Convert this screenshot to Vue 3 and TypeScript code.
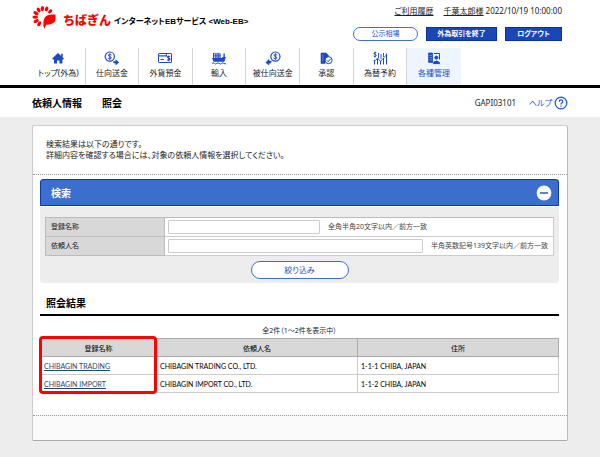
<script setup lang="ts">
import { ref } from 'vue'

type IconName = 'home' | 'send' | 'card' | 'ship' | 'receive' | 'approve' | 'rate' | 'manage'

interface NavItem {
  label: string
  icon: IconName
  active?: boolean
}

interface Client {
  name: string
  client: string
  address: string
}

const navItems: NavItem[] = [
  { label: 'トップ(外為)', icon: 'home' },
  { label: '仕向送金', icon: 'send' },
  { label: '外貨預金', icon: 'card' },
  { label: '輸入', icon: 'ship' },
  { label: '被仕向送金', icon: 'receive' },
  { label: '承認', icon: 'approve' },
  { label: '為替予約', icon: 'rate' },
  { label: '各種管理', icon: 'manage', active: true },
]

const clients: Client[] = [
  { name: 'CHIBAGIN TRADING', client: 'CHIBAGIN TRADING CO., LTD.', address: '1-1-1 CHIBA, JAPAN' },
  { name: 'CHIBAGIN IMPORT', client: 'CHIBAGIN IMPORT CO., LTD.', address: '1-1-2 CHIBA, JAPAN' },
]

const registeredName = ref('')
const clientName = ref('')
const searchOpen = ref(true)
</script>

<template>
  <div class="page">
    <header class="header">
      <div class="top">
        <div class="brand">
          <svg class="flower" viewBox="0 0 24 24" aria-hidden="true">
            <g fill="#f00">
              <ellipse cx="10.4" cy="3.6" rx="1.7" ry="2.6" />
              <ellipse cx="14.6" cy="4" rx="1.7" ry="2.5" transform="rotate(20 14.6 4)" />
              <ellipse cx="18.2" cy="6.4" rx="1.6" ry="2.4" transform="rotate(48 18.2 6.4)" />
              <ellipse cx="6.6" cy="5" rx="1.7" ry="2.7" transform="rotate(-30 6.6 5)" />
              <ellipse cx="4" cy="8.2" rx="1.7" ry="2.8" transform="rotate(-58 4 8.2)" />
              <ellipse cx="3.2" cy="12.1" rx="1.7" ry="2.8" transform="rotate(-86 3.2 12.1)" />
              <ellipse cx="4.2" cy="16" rx="1.7" ry="2.8" transform="rotate(-116 4.2 16)" />
              <ellipse cx="7.2" cy="18.8" rx="1.7" ry="2.7" transform="rotate(-148 7.2 18.8)" />
              <path d="M12.6 24 Q10.8 21.4 11.4 18.4 Q11.4 13 14.6 10.8 Q17.6 9 23.4 9.6 Q23.8 13.4 23.2 16 Q20.6 19.8 14.4 19.8 Q13 21.2 12.6 24Z" />
            </g>
          </svg>
          <span class="bank">ちばぎん</span>
          <span class="service">インターネットEBサービス &lt;Web-EB&gt;</span>
        </div>
        <div class="tools">
          <div class="account">
            <a href="#history">ご利用履歴</a>
            <span><a href="#user">千葉太郎様</a> 2022/10/19 10:00:00</span>
          </div>
          <div class="buttons">
            <button type="button" class="pill quote">公示相場</button>
            <button type="button" class="solid end">外為取引を終了</button>
            <button type="button" class="solid logout">ログアウト</button>
          </div>
        </div>
      </div>
      <nav class="nav">
        <a v-for="item in navItems" :key="item.icon" href="#menu" :class="{ active: item.active }">
          <svg class="icon" viewBox="0 0 16 14" aria-hidden="true">
            <g v-if="item.icon === 'home'" fill="#1b49c4">
              <path d="M8 2 L14 7.4 L13 8.4 H12.4 V12.6 H9.4 V9.4 H7 V12.6 H4 V8.4 H3 L2.2 7.4Z" />
              <path d="M11.2 2.8h1.6v3h-1.6z" />
            </g>
            <g v-else-if="item.icon === 'send'" fill="none" stroke="#1b49c4">
              <circle cx="5.8" cy="5.6" r="4.6" stroke-width="1.2" />
              <path d="M7.6 4 Q6 2.9 4.5 3.9 Q4.1 5.2 5.8 5.6 Q7.8 6.1 7.2 7.3 Q5.8 8.4 4 7.2 M5.8 2.4v6.6" stroke-width=".9" />
              <path d="M9.6 10.6h2.2V8.8l3 2.6-3 2.4v-1.8H9.8z" fill="#1b49c4" stroke-width=".6" />
            </g>
            <g v-else-if="item.icon === 'card'" fill="none" stroke="#1b49c4">
              <rect x="1.5" y="2.5" width="13" height="9" rx=".6" />
              <path d="M1.5 4.9h8" stroke-width="1.2" />
              <path d="M3.5 8.5h3.4" />
              <path d="M13 5.6 Q11.6 4.8 10.6 5.6 Q10.2 7 12 7.2 Q13.6 7.8 12.8 8.9 Q11.6 9.7 10.2 8.8 M11.8 4.4v5.8" stroke-width="1.1" />
              <path d="M9.4 2.5v3" />
            </g>
            <g v-else-if="item.icon === 'ship'" fill="#1b49c4">
              <path d="M1 7h9.4l1.2-1h3.2L13.4 10.8H2.6z" />
              <path d="M2 2h1.2v5H2zM4.2 3h1.4v4H4.2zM6.4 2.4h1.4V7H6.4zM8.4 3h1.2v4H8.4zM12.4 2.4h1.4v4h-1.4z" />
              <path d="M2 2.4h7.4M2 4.8h7.4" fill="none" stroke="#1b49c4" stroke-width=".7" />
              <path d="M1 12.4q1.2-1.2 2.4 0t2.4 0 2.4 0 2.4 0 2.4 0 2 0" fill="none" stroke="#1b49c4" />
            </g>
            <g v-else-if="item.icon === 'receive'" fill="none" stroke="#1b49c4">
              <circle cx="10.4" cy="5.6" r="4.6" stroke-width="1.2" />
              <path d="M12.2 4 Q10.6 2.9 9.1 3.9 Q8.7 5.2 10.4 5.6 Q12.4 6.1 11.8 7.3 Q10.4 8.4 8.6 7.2 M10.4 2.4v6.6" stroke-width=".9" />
              <path d="M6.4 10H4V8.4L.8 11.4l3 2.6v-1.8h1.6z" fill="#1b49c4" stroke-width=".6" />
            </g>
            <g v-else-if="item.icon === 'approve'" fill="none" stroke="#1b49c4">
              <path d="M3 2h5l2.6 2.6v1.2L7 8v4.6H3z" fill="#1b49c4" stroke-width=".6" />
              <path d="M4.8 3.4v7" stroke="#8ea6e4" stroke-width=".6" />
              <circle cx="10.6" cy="9.2" r="3.5" fill="#fff" />
              <path d="M8.8 9.2l1.4 1.4 2.4-2.8" />
            </g>
            <g v-else-if="item.icon === 'rate'" fill="none" stroke="#1b49c4">
              <path d="M4.4 1.8 Q3 1 2 2 Q1.8 3.2 3.2 3.4 Q4.8 4 4 5.2 Q3 6 1.6 5.1 M3.1.6v6" stroke-width=".9" />
              <path d="M2.5 13.5V10M5.5 13.5V8M8.5 13.5V10M11.5 13.5V7M14.5 13.5V2.5" />
              <path d="M1.5 9.4h2l2-2.4 3 3.4L14.4 4" stroke-width=".9" />
              <path d="M6.5 2v5M9 3v5M11.5 2v4" stroke-width=".9" />
            </g>
            <g v-else fill="none" stroke="#1b49c4">
              <path d="M2.6 2h4v9.4h-4z" fill="#1b49c4" stroke-width=".8" />
              <path d="M3.4 4.4H6M3.4 6.6H6M3.4 8.8H6" stroke="#a9bdf0" stroke-width=".6" />
              <path d="M8 2.5h5.5v6" />
              <circle cx="10.4" cy="6.6" r="1.5" fill="#1b49c4" />
              <path d="M7.4 12.6v-1.2q3-2.8 6 0v1.2z" fill="#1b49c4" />
            </g>
          </svg>
          <span>{{ item.label }}</span>
        </a>
      </nav>
    </header>

    <div class="titlebar">
      <h1><span>依頼人情報</span><span>照会</span></h1>
      <div class="screen">
        <span>GAPI03101</span>
        <a href="#help" class="help">
          ヘルプ
          <svg viewBox="0 0 14 14" aria-hidden="true">
            <g fill="none" stroke="#1d54d0" stroke-width="1.2">
              <circle cx="7" cy="7" r="5.8" />
              <path d="M5.2 5.6 Q5.3 3.9 7 3.9 Q8.8 3.9 8.8 5.5 Q8.8 6.4 7.8 6.9 Q7 7.4 7 8.4M7 9.4v1.3" />
            </g>
          </svg>
        </a>
      </div>
    </div>

    <main class="panel">
      <p class="intro">検索結果は以下の通りです。<br>詳細内容を確認する場合には、対象の依頼人情報を選択してください。</p>

      <div class="content">
        <form class="search" @submit.prevent>
          <div class="search-head">
            <h2>検索</h2>
            <button type="button" class="toggle" aria-label="検索" :aria-expanded="searchOpen" @click="searchOpen = !searchOpen">
              <svg viewBox="0 0 16 16" aria-hidden="true">
                <circle cx="8" cy="8" r="7.4" fill="#fff" />
                <path d="M4 8h8" stroke="#1d4cba" stroke-width="1.4" />
              </svg>
            </button>
          </div>
          <div v-show="searchOpen" class="search-body">
            <div class="fields">
              <label for="registered-name">登録名称</label>
              <div class="field">
                <input id="registered-name" v-model="registeredName" class="short" type="text">
                <span>全角半角20文字以内／前方一致</span>
              </div>
              <label for="client-name">依頼人名</label>
              <div class="field">
                <input id="client-name" v-model="clientName" class="long" type="text">
                <span>半角英数記号139文字以内／前方一致</span>
              </div>
            </div>
            <button type="submit" class="pill filter">絞り込み</button>
          </div>
        </form>

        <h2 class="result-title">照会結果</h2>
        <p class="count">全2件（1～2件を表示中）</p>
        <div class="results">
          <table>
            <thead>
              <tr>
                <th class="col-name">登録名称</th>
                <th class="col-client">依頼人名</th>
                <th>住所</th>
              </tr>
            </thead>
            <tbody>
              <tr v-for="row in clients" :key="row.name">
                <td><a href="#client">{{ row.name }}</a></td>
                <td>{{ row.client }}</td>
                <td>{{ row.address }}</td>
              </tr>
            </tbody>
          </table>
          <div class="highlight"></div>
        </div>
      </div>
      <div class="panel-foot"></div>
    </main>
  </div>
</template>

<style>
body {
  margin: 0;
  background: #ededed;
}
</style>

<style scoped>
.page {
  font: 8px/12px "Noto Sans", "Noto Sans CJK JP", sans-serif;
  font-feature-settings: "palt";
  color: #222;
}

* {
  box-sizing: border-box;
}

h1,
h2,
p {
  margin: 0;
}

button,
input {
  font: inherit;
  font-feature-settings: inherit;
  padding: 0;
}

a {
  color: inherit;
}

.header {
  padding: 5px 32px 0;
  background: #fff;
  border-bottom: 3px solid #000;
}

.top {
  display: flex;
  justify-content: space-between;
  height: 43px;
}

.brand {
  display: flex;
  align-items: flex-start;
  white-space: nowrap;
}

.flower {
  width: 24px;
  height: 24px;
  margin-right: 7px;
}

.bank {
  padding-top: 7px;
  margin-right: 3px;
  font: 900 12px/16px "Noto Sans CJK JP", sans-serif;
  font-feature-settings: normal;
  color: #f00;
}

.service {
  padding-top: 11px;
  font: bold 8px/12px "Liberation Sans", "Noto Sans CJK JP", sans-serif;
  font-feature-settings: "palt";
  color: #000;
}

.tools {
  padding-right: 6px;
}

.account {
  display: flex;
  justify-content: flex-end;
  gap: 10px;
  white-space: nowrap;
}

.buttons {
  display: flex;
  justify-content: flex-end;
  align-items: center;
  gap: 8px;
  margin-top: 10px;
}

.pill {
  border: 1px solid #3f6fd0;
  border-radius: 9px;
  background: #fff;
  color: #1d4fc4;
}

.quote {
  width: 65px;
  height: 14px;
  font-size: 7px;
  line-height: 12px;
}

.solid {
  height: 14px;
  border: 1px solid #0a2fa0;
  background: #1a47b8;
  color: #fff;
  font-size: 7px;
  font-weight: bold;
  line-height: 12px;
}

.end {
  width: 71px;
}

.logout {
  width: 57px;
}

.nav {
  display: grid;
  grid-template-columns: repeat(8, minmax(0, 1fr));
  width: 80%;
  height: 37px;
}

.nav a {
  display: flex;
  flex-direction: column;
  align-items: center;
  gap: 2px;
  padding-top: 3px;
  border-right: 1px solid #d4d4d4;
  text-decoration: none;
  white-space: nowrap;
}

.nav a.active {
  border-right: 0;
  background: #eff5ff;
  color: #1d4fc4;
}

.icon {
  width: 16px;
  height: 14px;
}

.titlebar {
  display: flex;
  align-items: center;
  justify-content: space-between;
  height: 29px;
  padding: 0 32px;
  background: #fff;
}

h1 {
  display: flex;
  gap: 20px;
  font-size: 10px;
  line-height: 16px;
  color: #000;
}

.screen {
  display: flex;
  align-items: center;
  gap: 13px;
}

.help {
  display: flex;
  align-items: center;
  gap: 2px;
  color: #1d54d0;
  text-decoration: none;
}

.help svg {
  width: 14px;
  height: 14px;
}

.panel {
  margin: 8px 32px 16px;
  border: 1px solid #ccc;
  border-right-color: #bbb;
  border-bottom-color: #aaa;
  border-radius: 2px;
  background: #fff;
}

.intro {
  padding: 12px 13px 14px;
  border-bottom: 1px dotted #999;
  line-height: 11px;
}

.content {
  padding: 4px 8px 22px 7px;
}

.search {
  border-radius: 3px;
  background: #ededed;
}

.search-head {
  display: flex;
  align-items: center;
  justify-content: space-between;
  height: 27px;
  padding: 0 6px 0 10px;
  border: 1px solid #0b3ab0;
  border-radius: 3px 3px 0 0;
  background: #3c6fcd;
  color: #fff;
}

h2 {
  font-size: 10px;
  line-height: 16px;
}

.toggle {
  display: flex;
  border: 0;
  background: none;
}

.toggle svg {
  width: 16px;
  height: 16px;
}

.search-body {
  padding: 10px 5px 4px;
  border-top: 1px solid #fff;
}

.fields {
  display: grid;
  grid-template-columns: 119px minmax(0, 1fr);
  border: 1px solid #bbb;
  border-width: 1px 0 0 1px;
}

.fields label,
.field {
  display: flex;
  align-items: center;
  height: 19px;
  border: 1px solid #bbb;
  border-width: 0 1px 1px 0;
  font-size: 7px;
}

.fields label {
  padding-left: 5px;
  background: #d8d8d8;
}

.field {
  gap: 8px;
  padding-left: 3px;
  border-color: #ccc;
  background: #fff;
  color: #444;
  white-space: nowrap;
}

input {
  height: 14px;
  border: 1px solid #ccc;
  border-radius: 1px;
  background: #fff;
}

.short {
  width: 152px;
}

.long {
  width: 255px;
}

.filter {
  display: block;
  width: 98px;
  height: 18px;
  margin: 5px auto 0;
  line-height: 16px;
}

.result-title {
  padding: 12px 6px 3px;
  border-bottom: 2px solid #000;
  color: #000;
}

.count {
  padding: 9px 0 1px;
  text-align: center;
  font-size: 7px;
}

.results {
  position: relative;
}

table {
  width: 100%;
  border-collapse: collapse;
  table-layout: fixed;
  font-family: Lato, "Noto Sans CJK JP", sans-serif;
  font-size: 7px;
  color: #000;
}

th,
td {
  height: 18px;
  padding: 0 3px;
  border: 1px solid #ccc;
  text-align: left;
}

th {
  border-color: #aaa;
  background: #d8d8d8;
  text-align: center;
  font-weight: normal;
}

.col-name {
  width: 116px;
}

.col-client {
  width: 201px;
}

td a {
  color: #1d4a70;
}

.highlight {
  position: absolute;
  top: -2px;
  left: -1px;
  width: 118px;
  height: 58px;
  border: 3px solid #f00;
  border-radius: 4px;
  pointer-events: none;
}

.panel-foot {
  height: 25px;
  border-top: 1px dotted #999;
  background: #fafafa;
}
</style>
